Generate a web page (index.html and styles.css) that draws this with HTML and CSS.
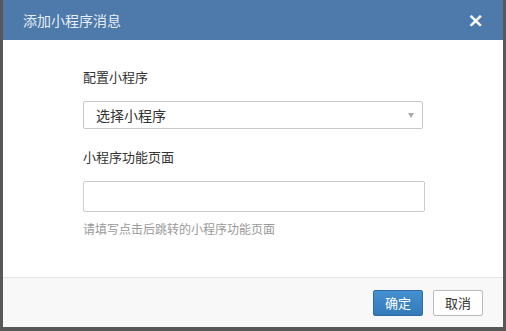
FILE: index.html
```html
<!DOCTYPE html>
<html lang="zh-CN">
<head>
    <meta charset="UTF-8">
    <meta name="viewport" content="width=device-width, initial-scale=1.0">
    <title>添加小程序消息</title>
    <link rel="stylesheet" href="styles.css">
</head>
<body>

    <!-- Dialog for adding a mini program message -->
    <div class="modal">
        <div class="modal-header">
            <span class="modal-title">添加小程序消息</span>
            <span class="modal-close">&times;</span>
        </div>

        <div class="modal-body">
            <div class="form-group">
                <label class="form-label" for="miniApp">配置小程序</label>
                <div class="select-box" id="miniApp">
                    <span>选择小程序</span>
                    <span class="select-arrow"></span>
                </div>
            </div>

            <div class="form-group">
                <label class="form-label" for="pagePath">小程序功能页面</label>
                <input class="text-input" id="pagePath" type="text">
                <p class="help-text">请填写点击后跳转的小程序功能页面</p>
            </div>
        </div>

        <div class="modal-footer">
            <button class="btn btn-primary">确定</button>
            <button class="btn btn-default">取消</button>
        </div>
    </div>

</body>
</html>
```

FILE: styles.css
```css
body {
    margin: 0;
    height: 331px;
    background-color: #585858;
    font-family: "Noto Sans CJK SC", "Liberation Sans", sans-serif;
    font-size: 13px;
    color: #333333;
    overflow: hidden;
}

.modal {
    width: 500px;
    margin-left: 3px;
    height: 327px;
    background-color: #FFFFFF;
    display: flex;
    flex-direction: column;
}

.modal-header {
    height: 40px;
    background-color: #4D7AAB;
    display: flex;
    align-items: center;
    justify-content: space-between;
    padding: 0 19px 0 20px;
}

.modal-title {
    font-size: 14px;
    color: #E6EDF5;
}

.modal-close {
    font-family: "DejaVu Sans", sans-serif;
    font-size: 20px;
    font-weight: bold;
    color: #FFFFFF;
    line-height: 1;
}

.modal-body {
    flex: 1;
    padding: 27px 0 0 80px;
}

.form-group {
    width: 342px;
    margin-bottom: 18px;
}

.form-label {
    display: block;
    line-height: 20px;
    margin-bottom: 14px;
}

.select-box {
    width: 340px;
    height: 28px;
    box-sizing: border-box;
    border: 1px solid #C8C8C8;
    border-radius: 2px;
    display: flex;
    align-items: center;
    justify-content: space-between;
    padding: 0 8px 0 12px;
    font-size: 14px;
}

.select-arrow {
    width: 0;
    height: 0;
    border-left: 3px solid transparent;
    border-right: 3px solid transparent;
    border-top: 5px solid #AAAAAA;
}

.text-input {
    display: block;
    width: 342px;
    height: 31px;
    box-sizing: border-box;
    border: 1px solid #CCCCCC;
    border-radius: 2px;
    margin: 0;
    padding: 0 10px;
}

.help-text {
    margin: 8px 0 0;
    font-size: 12px;
    line-height: 18px;
    color: #999999;
}

.modal-footer {
    height: 50px;
    box-sizing: border-box;
    border-top: 1px solid #E5E5E5;
    background-color: #F8F8F8;
    display: flex;
    align-items: center;
    justify-content: flex-end;
    gap: 10px;
    padding: 0 20px 0 0;
}

.btn {
    width: 50px;
    height: 26px;
    box-sizing: border-box;
    border-radius: 2px;
    font-family: "Noto Sans CJK SC", "Liberation Sans", sans-serif;
    font-size: 13px;
    padding: 0;
    cursor: pointer;
}

.btn-primary {
    background: linear-gradient(#4590D2, #337AB7);
    border: 1px solid #2E6DA4;
    color: #FFFFFF;
}

.btn-default {
    background-color: #FFFFFF;
    border: 1px solid #BBBBBB;
    color: #333333;
}
```
